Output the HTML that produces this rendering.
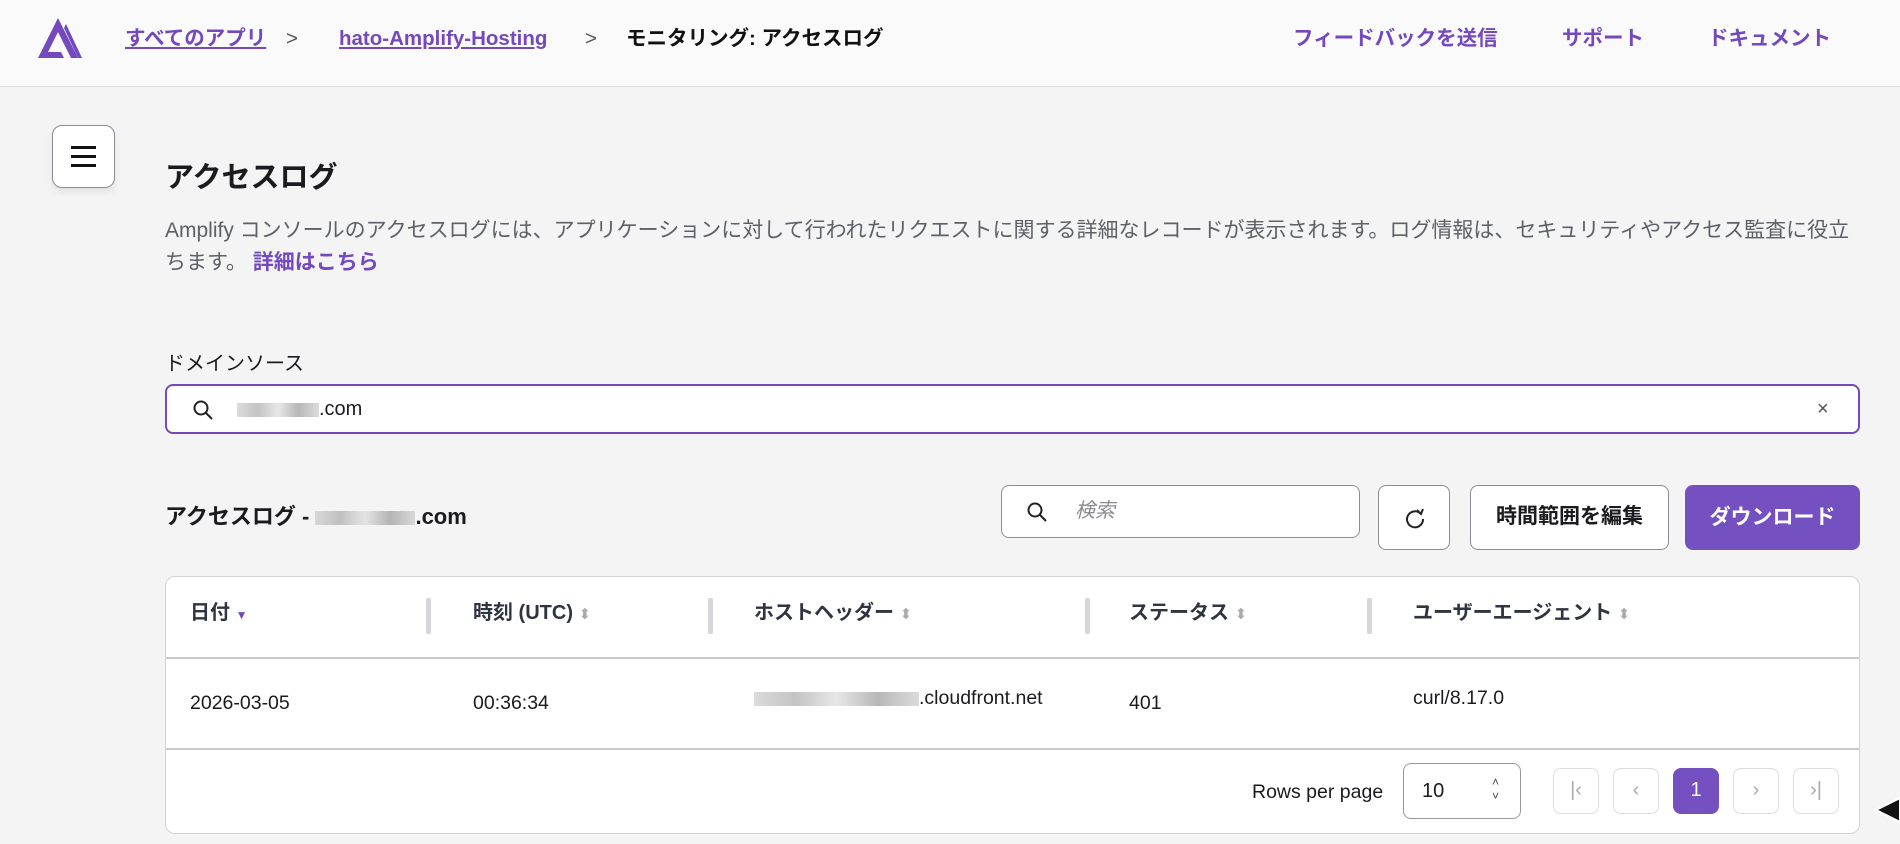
<!DOCTYPE html>
<html><head><meta charset="utf-8"><style>
*{box-sizing:border-box;margin:0;padding:0}
body{width:1900px;height:844px;overflow:hidden;background:#f4f4f5;font-family:"Liberation Sans","Noto Sans CJK JP",sans-serif;color:#1b1b1f;position:relative}
.abs{position:absolute}
.hdr{left:0;top:0;width:1900px;height:87px;background:#fafafa;border-bottom:1px solid #dcdcdf}
.p{color:#7349bd}
a{color:#7349bd;text-decoration:underline;font-weight:700}
.bc{top:25px;font-size:20.5px;font-weight:700;line-height:28px}
.box{background:#fff;border:1.5px solid #8c8c94;border-radius:8px}
.th{top:598px;font-size:20px;font-weight:700;color:#2e3440;line-height:30px}
.td{font-size:19.5px;color:#1b1b1f;line-height:26px}
.div{top:598px;width:5px;height:36px;background:#d6d6da;border-radius:2px}
.pg{top:768px;width:46px;height:46px;border:1.5px solid #dcdce0;border-radius:8px;background:#fff;color:#aaa;font-size:20px;text-align:center;line-height:42px}
.blur{display:inline-block;height:14px;background:linear-gradient(90deg,#ccc,#aaa,#ddd,#999,#ccc);vertical-align:middle;opacity:.7}
.s{font-size:15px;color:#aaa;font-weight:400}
</style></head><body>
<div class="abs hdr"></div>
<svg class="abs" style="left:38px;top:18px" width="44" height="40" viewBox="0 0 44 40"><path d="M20 0 L0 40 H26 L23 34 H10 L20 14 L33 40 H40 Z" fill="#7349bd"/><path d="M26 10 L40 40 H44 L28 6Z" fill="#7349bd"/></svg>
<div class="abs bc" style="left:125px"><a>すべてのアプリ</a></div>
<div class="abs bc" style="left:286px;color:#555;font-weight:400">&gt;</div>
<div class="abs bc" style="left:339px"><a>hato-Amplify-Hosting</a></div>
<div class="abs bc" style="left:585px;color:#555;font-weight:400">&gt;</div>
<div class="abs bc" style="left:626px;color:#111">モニタリング: アクセスログ</div>
<div class="abs bc p" style="left:1293px">フィードバックを送信</div>
<div class="abs bc p" style="left:1562px">サポート</div>
<div class="abs bc p" style="left:1708px">ドキュメント</div>
<div class="abs box" style="left:52px;top:125px;width:63px;height:63px;border-radius:10px;box-shadow:0 4px 8px rgba(0,0,0,.08)">
<div class="abs" style="left:18px;top:20px;width:25px;height:2.5px;background:#111"></div>
<div class="abs" style="left:18px;top:29px;width:25px;height:2.5px;background:#111"></div>
<div class="abs" style="left:18px;top:38px;width:25px;height:2.5px;background:#111"></div></div>
<div class="abs" style="left:165px;top:160px;font-size:29px;font-weight:700;line-height:36px">アクセスログ</div>
<div class="abs" style="left:165px;top:215px;width:1698px;font-size:21px;color:#5d6066;line-height:32px">Amplify コンソールのアクセスログには、アプリケーションに対して行われたリクエストに関する詳細なレコードが表示されます。ログ情報は、セキュリティやアクセス監査に役立<br>ちます。 <span class="p" style="font-weight:700">詳細はこちら</span></div>
<div class="abs" style="left:165px;top:351px;font-size:20px;line-height:26px">ドメインソース</div>
<div class="abs box" style="left:165px;top:384px;width:1695px;height:50px;border:2px solid #7349bd">
<svg class="abs" style="left:25px;top:13px" width="22" height="22" viewBox="0 0 22 22"><circle cx="9" cy="9" r="6.5" fill="none" stroke="#222" stroke-width="2"/><path d="M14 14 L20 20" stroke="#222" stroke-width="2"/></svg>
<div class="abs" style="left:70px;top:10px;font-size:20px;line-height:26px"><span class="blur" style="width:82px"></span>.com</div>
<div class="abs" style="left:1650px;top:10px;font-size:20px;color:#555;line-height:26px">×</div></div>
<div class="abs" style="left:165px;top:503px;font-size:22px;font-weight:700;line-height:28px">アクセスログ - <span class="blur" style="width:100px"></span>.com</div>
<div class="abs box" style="left:1001px;top:485px;width:359px;height:53px">
<svg class="abs" style="left:24px;top:15px" width="22" height="22" viewBox="0 0 22 22"><circle cx="9" cy="9" r="6.5" fill="none" stroke="#222" stroke-width="2"/><path d="M14 14 L20 20" stroke="#222" stroke-width="2"/></svg>
<div class="abs" style="left:73px;top:12px;font-size:20px;color:#8a8a90;font-style:italic;line-height:26px">検索</div></div>
<div class="abs box" style="left:1378px;top:485px;width:72px;height:65px">
<svg class="abs" style="left:24px;top:20px" width="24" height="24" viewBox="0 0 24 24"><path d="M18 8 A8 8 0 1 0 20 13" fill="none" stroke="#222" stroke-width="2"/><path d="M14 4 L18 8 L20 3" fill="none" stroke="#222" stroke-width="2"/></svg></div>
<div class="abs box" style="left:1470px;top:485px;width:199px;height:65px;text-align:center;line-height:62px;font-size:21px;font-weight:700">時間範囲を編集</div>
<div class="abs" style="left:1685px;top:485px;width:175px;height:65px;background:#7550c0;border-radius:8px;color:#fff;text-align:center;line-height:65px;font-size:21px;font-weight:700">ダウンロード</div>
<div class="abs" style="left:165px;top:576px;width:1695px;height:258px;background:#fff;border:1.5px solid #d4d4d8;border-radius:10px"></div>
<div class="abs" style="left:166px;top:657px;width:1693px;height:1.5px;background:#c9c9ce"></div>
<div class="abs" style="left:166px;top:748px;width:1693px;height:1.5px;background:#c9c9ce"></div>
<div class="abs th" style="left:190px">日付 <span style="font-size:12px;color:#7349bd">▼</span></div>
<div class="abs th" style="left:473px">時刻 (UTC) <span class="s">⬍</span></div>
<div class="abs th" style="left:754px">ホストヘッダー <span class="s">⬍</span></div>
<div class="abs th" style="left:1129px">ステータス <span class="s">⬍</span></div>
<div class="abs th" style="left:1413px">ユーザーエージェント <span class="s">⬍</span></div>
<div class="abs div" style="left:426px"></div>
<div class="abs div" style="left:708px"></div>
<div class="abs div" style="left:1085px"></div>
<div class="abs div" style="left:1367px"></div>
<div class="abs td" style="left:190px;top:690px">2026-03-05</div>
<div class="abs td" style="left:473px;top:690px">00:36:34</div>
<div class="abs td" style="left:754px;top:685px"><span class="blur" style="width:165px"></span>.cloudfront.net</div>
<div class="abs td" style="left:1129px;top:690px">401</div>
<div class="abs td" style="left:1413px;top:685px">curl/8.17.0</div>
<div class="abs td" style="left:1252px;top:779px">Rows per page</div>
<div class="abs box" style="left:1403px;top:763px;width:118px;height:56px;border-color:#999">
<div class="abs" style="left:18px;top:14px;font-size:20px;line-height:26px">10</div>
<div class="abs" style="left:88px;top:11px;font-size:12px;line-height:14px;color:#444">˄<br>˅</div></div>
<div class="abs pg" style="left:1553px">|‹</div>
<div class="abs pg" style="left:1613px">‹</div>
<div class="abs pg" style="left:1673px;background:#7550c0;border-color:#7550c0;color:#fff">1</div>
<div class="abs pg" style="left:1733px">›</div>
<div class="abs pg" style="left:1793px">›|</div>
<svg class="abs" style="left:1874px;top:796px" width="26" height="28" viewBox="0 0 26 28"><path d="M2 14 L26 2 V26 Z" fill="#111" stroke="#fff" stroke-width="2"/></svg>
</body></html>
